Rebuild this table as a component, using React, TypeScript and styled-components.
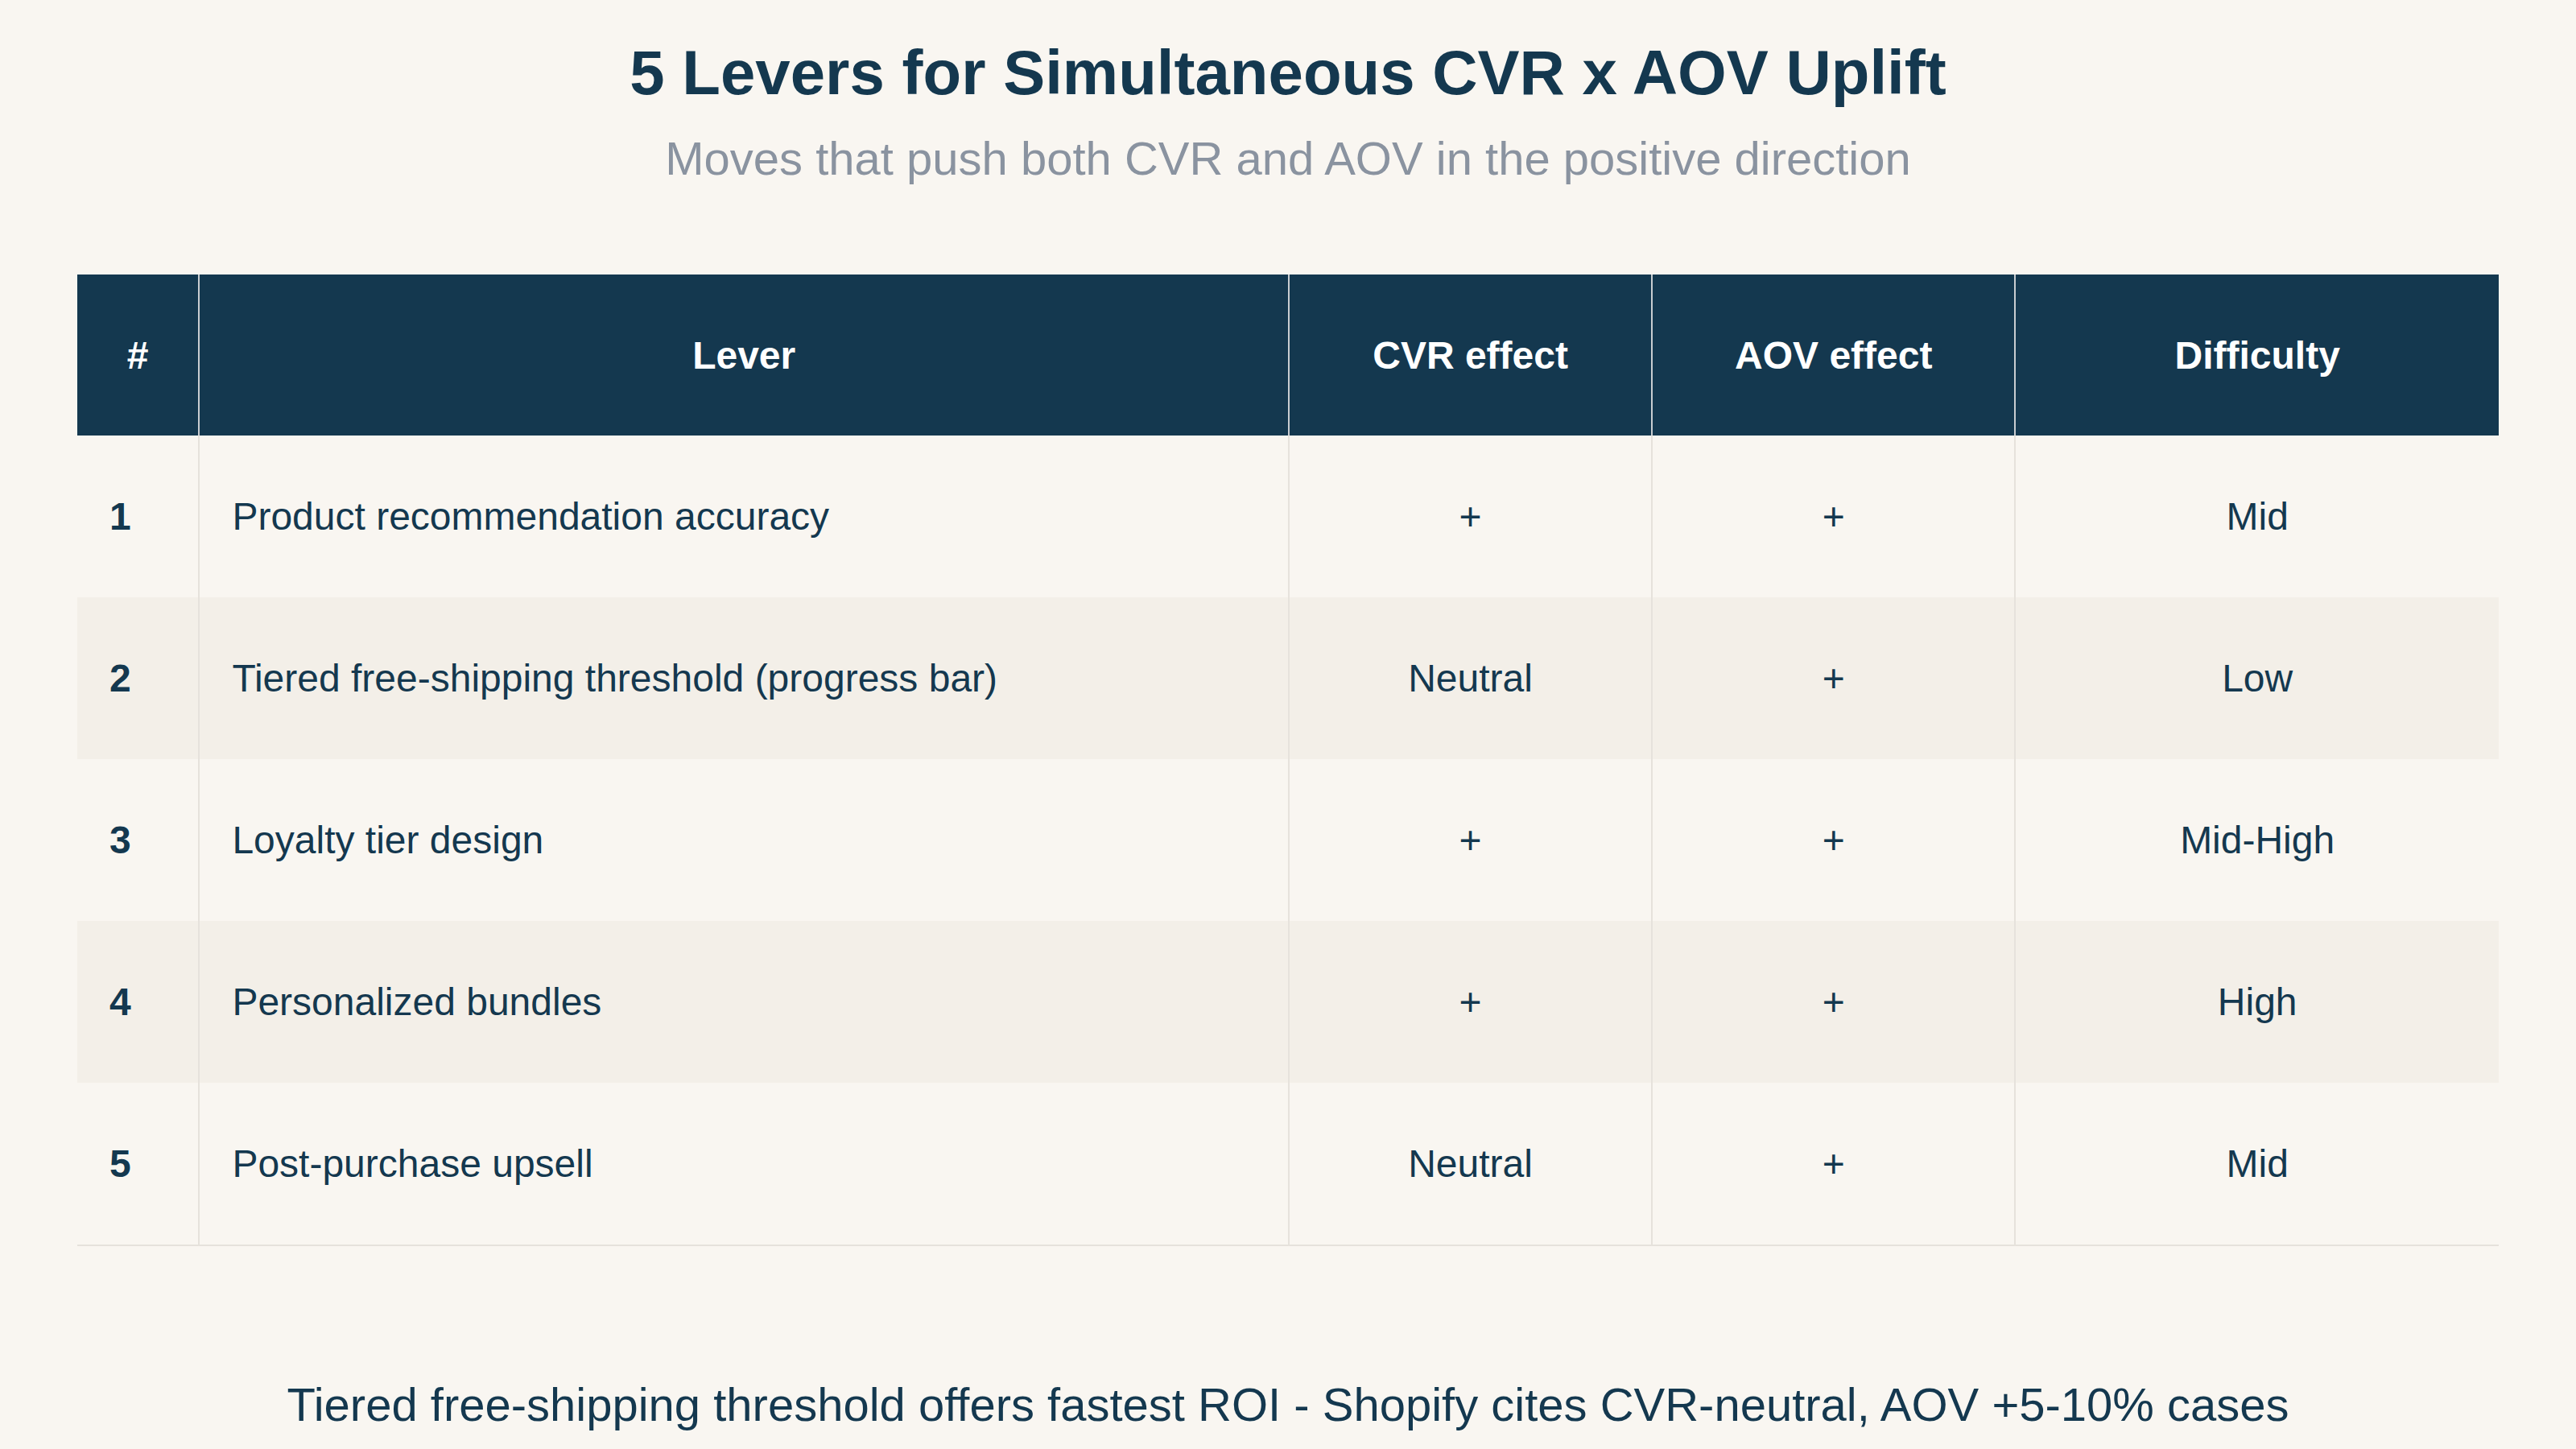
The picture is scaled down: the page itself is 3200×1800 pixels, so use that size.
import React from "react";
import styled, { createGlobalStyle } from "styled-components";

const GlobalStyle = createGlobalStyle`
  html, body {
    margin: 0;
    padding: 0;
    background: #f9f6f1;
  }
  body {
    font-family: "Liberation Sans", Arial, Helvetica, sans-serif;
    color: #14384f;
  }
`;

const Page = styled.div`
  width: 3200px;
  height: 1800px;
  box-sizing: border-box;
  padding: 44px 96px 0;
  background: #f9f6f1;
  display: flex;
  flex-direction: column;
  align-items: stretch;
`;

const Title = styled.h1`
  margin: 0;
  font-size: 78px;
  line-height: 1.2;
  font-weight: 700;
  text-align: center;
  color: #14384f;
`;

const Subtitle = styled.p`
  margin: 24px 0 0;
  font-size: 58px;
  line-height: 1.2;
  font-weight: 400;
  text-align: center;
  color: #8a93a0;
`;

const Table = styled.div`
  margin-top: 110px;
  display: flex;
  flex-direction: column;
  border-bottom: 2px solid #e6e2dc;
`;

const columns = "5% 45% 15% 15% 20%";

const HeaderRow = styled.div`
  display: grid;
  grid-template-columns: ${columns};
  height: 200px;
  background: #14384f;
`;

const HeaderCell = styled.div<{ $first?: boolean }>`
  display: flex;
  align-items: center;
  justify-content: center;
  font-size: 48px;
  font-weight: 700;
  color: #ffffff;
  border-left: ${(p) => (p.$first ? "none" : "2px solid #c9cdd1")};
`;

const Row = styled.div<{ $alt?: boolean }>`
  display: grid;
  grid-template-columns: ${columns};
  height: 201px;
  background: ${(p) => (p.$alt ? "#f3efe8" : "#f9f6f1")};
`;

const Cell = styled.div<{ $align?: "left" | "center"; $bold?: boolean; $first?: boolean }>`
  display: flex;
  align-items: center;
  justify-content: ${(p) => (p.$align === "left" ? "flex-start" : "center")};
  padding: 0 40px;
  font-size: 48px;
  font-weight: ${(p) => (p.$bold ? 700 : 400)};
  color: #14384f;
  white-space: nowrap;
  border-left: ${(p) => (p.$first ? "none" : "2px solid #e6e2dc")};
`;

const Footer = styled.p`
  margin: 162px 0 0;
  font-size: 58px;
  line-height: 1.2;
  font-weight: 400;
  text-align: center;
  color: #14384f;
`;

const rows = [
  { n: "1", lever: "Product recommendation accuracy", cvr: "+", aov: "+", diff: "Mid" },
  { n: "2", lever: "Tiered free-shipping threshold (progress bar)", cvr: "Neutral", aov: "+", diff: "Low" },
  { n: "3", lever: "Loyalty tier design", cvr: "+", aov: "+", diff: "Mid-High" },
  { n: "4", lever: "Personalized bundles", cvr: "+", aov: "+", diff: "High" },
  { n: "5", lever: "Post-purchase upsell", cvr: "Neutral", aov: "+", diff: "Mid" },
];

export default function App() {
  return (
    <>
      <GlobalStyle />
      <Page>
        <Title>5 Levers for Simultaneous CVR x AOV Uplift</Title>
        <Subtitle>Moves that push both CVR and AOV in the positive direction</Subtitle>
        <Table>
          <HeaderRow>
            <HeaderCell $first>#</HeaderCell>
            <HeaderCell>Lever</HeaderCell>
            <HeaderCell>CVR effect</HeaderCell>
            <HeaderCell>AOV effect</HeaderCell>
            <HeaderCell>Difficulty</HeaderCell>
          </HeaderRow>
          {rows.map((r, i) => (
            <Row key={r.n} $alt={i % 2 === 1}>
              <Cell $first $align="left" $bold>
                {r.n}
              </Cell>
              <Cell $align="left">{r.lever}</Cell>
              <Cell>{r.cvr}</Cell>
              <Cell>{r.aov}</Cell>
              <Cell>{r.diff}</Cell>
            </Row>
          ))}
        </Table>
        <Footer>
          Tiered free-shipping threshold offers fastest ROI - Shopify cites CVR-neutral, AOV +5-10% cases
        </Footer>
      </Page>
    </>
  );
}
